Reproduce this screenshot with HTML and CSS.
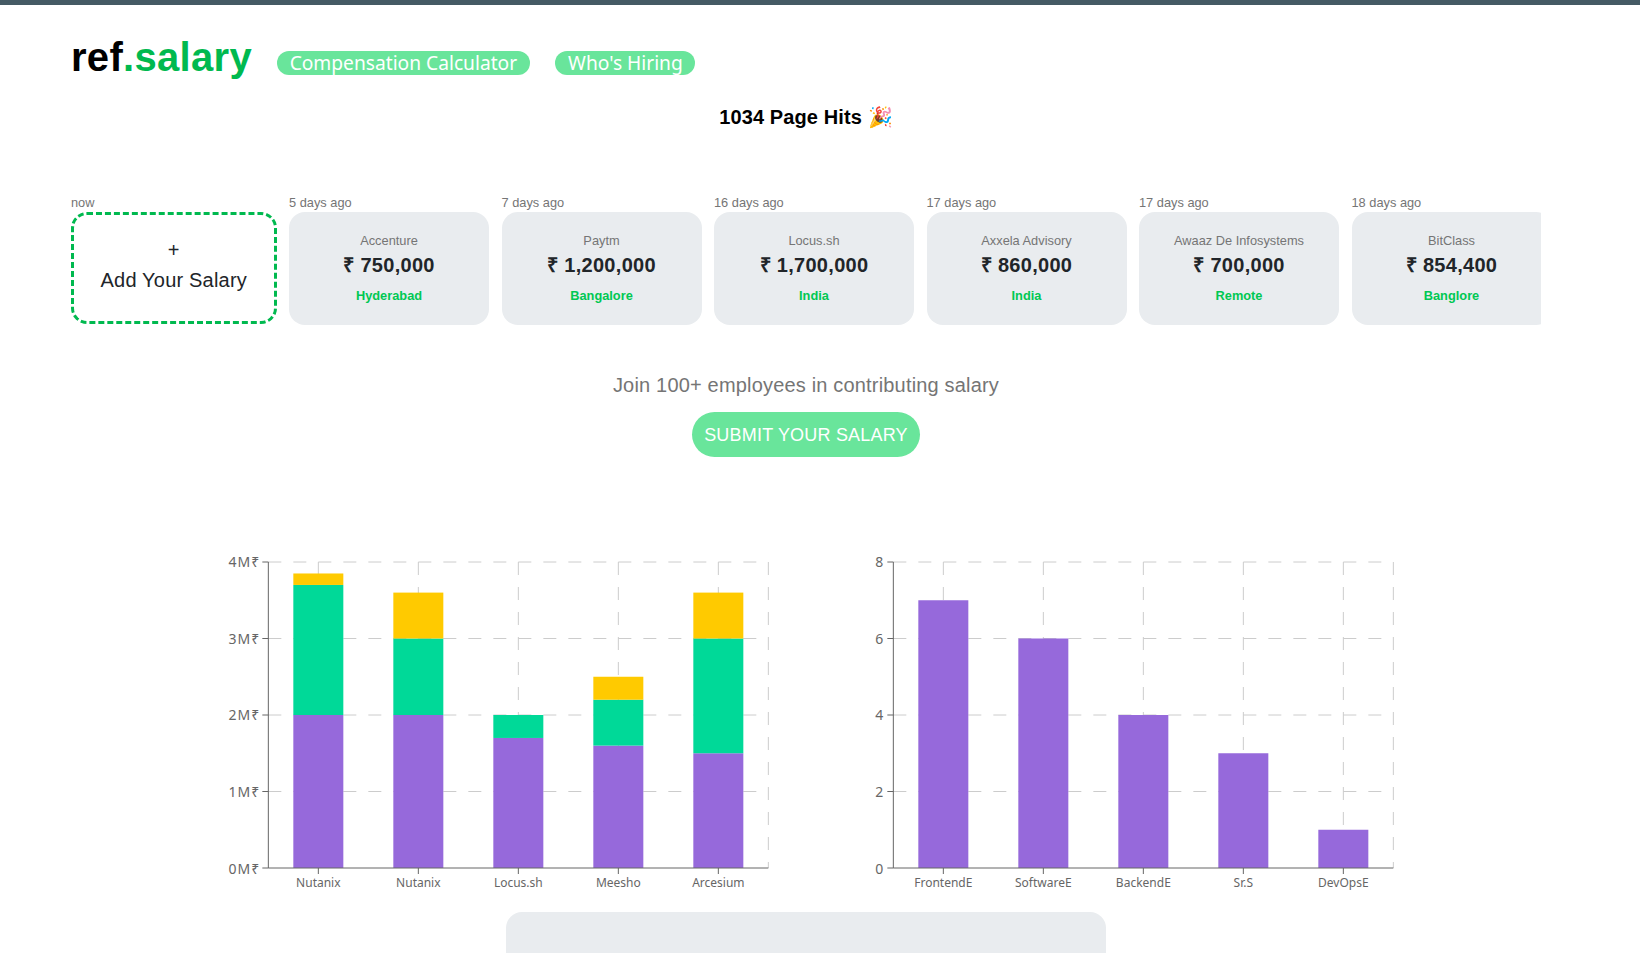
FILE: index.html
```html
<!DOCTYPE html>
<html lang="en">
<head>
    <meta charset="UTF-8">
    <title>ref.salary</title>
    <link rel="stylesheet" href="styles.css">
</head>
<body>
    <div class="top-bar"></div>

    <div class="page">
        <header class="header">
            <h1 class="logo">ref<span>.salary</span></h1>
            <nav class="nav">
                <a class="pill" href="#">Compensation Calculator</a>
                <a class="pill" href="#">Who's Hiring</a>
            </nav>
        </header>

        <h2 class="hits">1034 Page Hits 🎉</h2>

        <!-- latest salaries -->
        <section class="salary-row">
            <div class="salary-item add-item">
                <div class="when">now</div>
                <a class="add-card" href="#">
                    <span>+</span>
                    <span>Add Your Salary</span>
                </a>
            </div>
            <div class="salary-item">
                <div class="when">5 days ago</div>
                <div class="card">
                    <div class="company">Accenture</div>
                    <div class="amount">₹ 750,000</div>
                    <div class="location">Hyderabad</div>
                </div>
            </div>
            <div class="salary-item">
                <div class="when">7 days ago</div>
                <div class="card">
                    <div class="company">Paytm</div>
                    <div class="amount">₹ 1,200,000</div>
                    <div class="location">Bangalore</div>
                </div>
            </div>
            <div class="salary-item">
                <div class="when">16 days ago</div>
                <div class="card">
                    <div class="company">Locus.sh</div>
                    <div class="amount">₹ 1,700,000</div>
                    <div class="location">India</div>
                </div>
            </div>
            <div class="salary-item">
                <div class="when">17 days ago</div>
                <div class="card">
                    <div class="company">Axxela Advisory</div>
                    <div class="amount">₹ 860,000</div>
                    <div class="location">India</div>
                </div>
            </div>
            <div class="salary-item">
                <div class="when">17 days ago</div>
                <div class="card">
                    <div class="company">Awaaz De Infosystems</div>
                    <div class="amount">₹ 700,000</div>
                    <div class="location">Remote</div>
                </div>
            </div>
            <div class="salary-item">
                <div class="when">18 days ago</div>
                <div class="card">
                    <div class="company">BitClass</div>
                    <div class="amount">₹ 854,400</div>
                    <div class="location">Banglore</div>
                </div>
            </div>
        </section>

        <section class="join">
            <p class="join-text">Join 100+ employees in contributing salary</p>
            <a class="submit-btn" href="#">SUBMIT YOUR SALARY</a>
        </section>
    </div>

    <!-- charts -->
    <section class="charts">
        <svg class="chart" width="600" height="340" viewBox="-0.33 0 600 340">
            <g class="grid">
                <path d="M60 12H560M60 88.5H560M60 165H560M60 241.5H560"/>
                <path d="M110 12V318M210 12V318M310 12V318M410 12V318M510 12V318M560 12V318"/>
            </g>
            <g class="purple">
                <rect x="85" y="165" width="50" height="153"/>
                <rect x="185" y="165" width="50" height="153"/>
                <rect x="285" y="187.95" width="50" height="130.05"/>
                <rect x="385" y="195.6" width="50" height="122.4"/>
                <rect x="485" y="203.25" width="50" height="114.75"/>
            </g>
            <g class="green">
                <rect x="85" y="34.95" width="50" height="130.05"/>
                <rect x="185" y="88.5" width="50" height="76.5"/>
                <rect x="285" y="165" width="50" height="22.95"/>
                <rect x="385" y="149.7" width="50" height="45.9"/>
                <rect x="485" y="88.5" width="50" height="114.75"/>
            </g>
            <g class="yellow">
                <rect x="85" y="23.475" width="50" height="11.475"/>
                <rect x="185" y="42.6" width="50" height="45.9"/>
                <rect x="385" y="126.75" width="50" height="22.95"/>
                <rect x="485" y="42.6" width="50" height="45.9"/>
            </g>
            <path class="axis" d="M60 12V318H560M54 12H60M54 88.5H60M54 165H60M54 241.5H60M54 318H60M110 318V324M210 318V324M310 318V324M410 318V324M510 318V324"/>
            <g class="y-labels money">
                <text x="52" y="17">4M₹</text>
                <text x="52" y="93.5">3M₹</text>
                <text x="52" y="170">2M₹</text>
                <text x="52" y="246.5">1M₹</text>
                <text x="52" y="324">0M₹</text>
            </g>
            <g class="x-labels">
                <text x="110" y="337">Nutanix</text>
                <text x="210" y="337">Nutanix</text>
                <text x="310" y="337">Locus.sh</text>
                <text x="410" y="337">Meesho</text>
                <text x="510" y="337">Arcesium</text>
            </g>
        </svg>

        <svg class="chart" width="600" height="340" viewBox="-0.33 0 600 340">
            <g class="grid">
                <path d="M60 12H560M60 88.5H560M60 165H560M60 241.5H560"/>
                <path d="M110 12V318M210 12V318M310 12V318M410 12V318M510 12V318M560 12V318"/>
            </g>
            <g class="purple">
                <rect x="85" y="50.25" width="50" height="267.75"/>
                <rect x="185" y="88.5" width="50" height="229.5"/>
                <rect x="285" y="165" width="50" height="153"/>
                <rect x="385" y="203.25" width="50" height="114.75"/>
                <rect x="485" y="279.75" width="50" height="38.25"/>
            </g>
            <path class="axis" d="M60 12V318H560M54 12H60M54 88.5H60M54 165H60M54 241.5H60M54 318H60M110 318V324M210 318V324M310 318V324M410 318V324M510 318V324"/>
            <g class="y-labels">
                <text x="50" y="17">8</text>
                <text x="50" y="93.5">6</text>
                <text x="50" y="170">4</text>
                <text x="50" y="246.5">2</text>
                <text x="50" y="324">0</text>
            </g>
            <g class="x-labels">
                <text x="110" y="337">FrontendE</text>
                <text x="210" y="337">SoftwareE</text>
                <text x="310" y="337">BackendE</text>
                <text x="410" y="337">Sr.S</text>
                <text x="510" y="337">DevOpsE</text>
            </g>
        </svg>
    </section>

    <div class="page">
        <div class="panel"></div>
    </div>
</body>
</html>
```

FILE: styles.css
```css
html, body {
    height: 100%;
    overflow: hidden;
}
body {
    margin: 0;
    background-color: #fff;
    font-family: "Liberation Sans", Arial, sans-serif;
    color: #212529;
}
a {
    text-decoration: none;
}
.top-bar {
    height: 5px;
    background-color: #455a64;
}
.page {
    padding: 0 99px 0 71px;
}
.header {
    display: flex;
    padding-top: 29px;
}
.logo {
    margin: 0;
    font-size: 40px;
    line-height: 46px;
    font-weight: bold;
    letter-spacing: 0.3px;
    color: #000;
}
.logo span {
    color: #00b94f;
}
.nav {
    display: flex;
    gap: 25.5px;
    margin: 17px 0 0 25px;
}
.pill {
    height: 24px;
    padding: 0 12.7px;
    border-radius: 12px;
    background-color: #69e59b;
    color: #fff;
    font-family: "Noto Sans", sans-serif;
    font-size: 19.2px;
    line-height: 24px;
}
.hits {
    margin: 25px 0 0;
    text-align: center;
    font-size: 20px;
    line-height: 24px;
    font-weight: bold;
    letter-spacing: 0.1px;
    color: #000;
}
.salary-row {
    display: flex;
    gap: 12.5px;
    margin-top: 66px;
    overflow: hidden;
}
.salary-item {
    flex: 0 0 200px;
}
.add-item {
    flex-basis: 205.5px;
}
.when {
    margin-bottom: 2px;
    font-size: 12.8px;
    line-height: 15px;
    color: #757575;
}
.add-card {
    display: flex;
    flex-direction: column;
    align-items: center;
    justify-content: center;
    box-sizing: border-box;
    height: 112px;
    padding-bottom: 6px;
    border: 3px dashed #00b94f;
    border-radius: 16px;
    color: #212529;
    font-size: 20px;
    letter-spacing: 0.2px;
    line-height: 30px;
}
.card {
    box-sizing: border-box;
    height: 113px;
    padding-top: 21px;
    border-radius: 16px;
    background-color: #e9ecef;
    text-align: center;
}
.company {
    font-size: 12.8px;
    line-height: 15px;
    color: #757575;
}
.amount {
    margin-top: 5.5px;
    font-size: 20px;
    line-height: 23px;
    font-weight: bold;
    letter-spacing: 0.3px;
}
.location {
    margin-top: 11.5px;
    font-size: 12.8px;
    line-height: 15px;
    font-weight: bold;
    color: #00c853;
}
.join {
    display: flex;
    flex-direction: column;
    align-items: center;
    margin-top: 49px;
}
.join-text {
    margin: 0;
    font-size: 20px;
    line-height: 23px;
    letter-spacing: 0.18px;
    color: #757575;
}
.submit-btn {
    margin-top: 15px;
    width: 228px;
    height: 45px;
    border-radius: 23px;
    background-color: #69e59b;
    color: #fff;
    text-align: center;
    font-size: 18px;
    line-height: 47px;
    letter-spacing: 0.2px;
}
.charts {
    display: flex;
    gap: 25px;
    margin-top: 93px;
    padding-left: 208px;
}
.chart {
    flex: none;
    display: block;
}
.grid path {
    fill: none;
    stroke: #ccc;
    stroke-dasharray: 13 12;
}
.axis {
    fill: none;
    stroke: #666;
}
.purple {
    fill: #9669db;
}
.green {
    fill: #00d998;
}
.yellow {
    fill: #ffca00;
}
.y-labels text {
    font-family: "Noto Sans", sans-serif;
    font-size: 14px;
    fill: #666;
    text-anchor: end;
}
.money text {
    letter-spacing: 1px;
}
.x-labels text {
    font-family: "Noto Sans", sans-serif;
    font-size: 12px;
    fill: #666;
    text-anchor: middle;
}
.panel {
    width: 600px;
    height: 41px;
    margin: 22px auto 0;
    border-radius: 16px 16px 0 0;
    background-color: #e9ecef;
}
```
